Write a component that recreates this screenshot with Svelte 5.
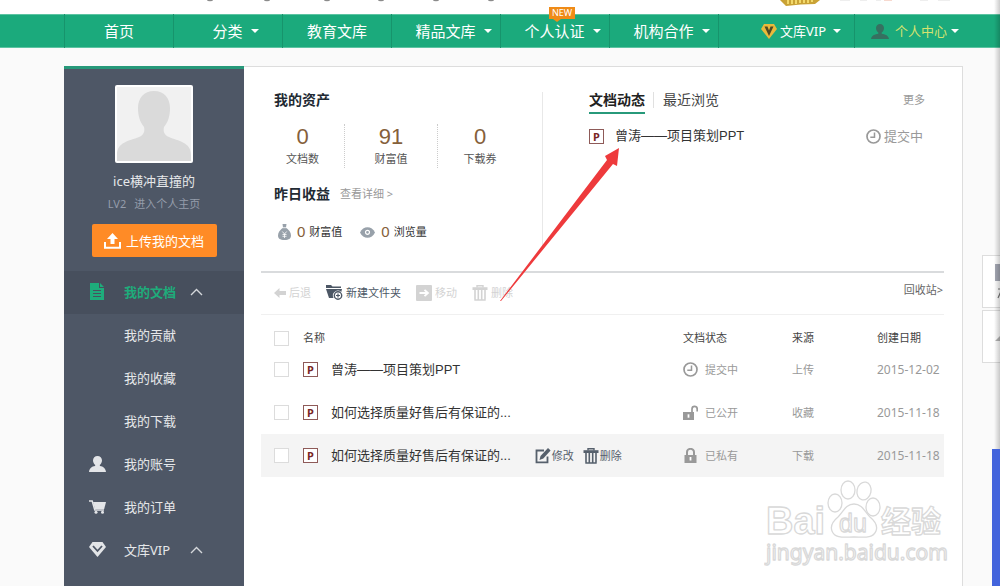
<script>
  const navItems = [
    { id: 'home', label: '首页' },
    { id: 'category', label: '分类', caret: true },
    { id: 'edu', label: '教育文库' },
    { id: 'featured', label: '精品文库', caret: true },
    { id: 'verify', label: '个人认证', caret: true, badge: 'NEW' },
    { id: 'partner', label: '机构合作', caret: true },
  ];

  const menu = [
    { id: 'docs', label: '我的文档', icon: 'doc', active: true, open: true },
    { id: 'contrib', label: '我的贡献' },
    { id: 'favs', label: '我的收藏' },
    { id: 'downloads', label: '我的下载' },
    { id: 'account', label: '我的账号', icon: 'user' },
    { id: 'orders', label: '我的订单', icon: 'cart' },
    { id: 'vip', label: '文库VIP', icon: 'vip', open: true },
  ];

  const stats = [
    { value: 0, label: '文档数' },
    { value: 91, label: '财富值' },
    { value: 0, label: '下载券' },
  ];

  let rows = $state([
    { title: '曾涛——项目策划PPT', icon: 'clock', status: '提交中', source: '上传', date: '2015-12-02', checked: false },
    { title: '如何选择质量好售后有保证的...', icon: 'unlock', status: '已公开', source: '收藏', date: '2015-11-18', checked: false },
    { title: '如何选择质量好售后有保证的...', icon: 'lock', status: '已私有', source: '下载', date: '2015-11-18', checked: false, current: true },
  ]);

  let allChecked = $derived(rows.every((r) => r.checked));

  function toggleAll(e) {
    const on = e.currentTarget.checked;
    rows.forEach((r) => (r.checked = on));
  }
</script>

{#snippet icon(name)}
  {#if name === 'doc'}
    <svg width="14" height="17" viewBox="0 0 14 17" aria-hidden="true">
      <path d="M0 0h9v5h5v12H0z M10 0l4 4h-4z" fill="#1eac7b" />
      <path d="M3 7.5h8M3 10.5h8M3 13.5h8" stroke="#48515f" stroke-width="1" />
    </svg>
  {:else if name === 'user'}
    <svg width="17" height="16" viewBox="0 0 17 16" aria-hidden="true">
      <path d="M8.500 0C5.900 0 4 2 4 4.600 4 6.400 5 8.200 6.300 9L6 10C3 10.500 0.500 12 0 16h17c-.5-4-3-5.500-6-6l-.3-1C12 8.200 13 6.400 13 4.600 13 2 11.100 0 8.500 0z" fill="currentColor" />
    </svg>
  {:else if name === 'cart'}
    <svg width="17" height="14" viewBox="0 0 17 14" aria-hidden="true">
      <path d="M0 1h3.200l2.600 9H15" fill="none" stroke="currentColor" stroke-width="1.500" />
      <path d="M4 2h13l-1.800 7H6z" fill="currentColor" />
      <circle cx="7" cy="12.300" r="1.500" fill="currentColor" />
      <circle cx="13.500" cy="12.300" r="1.500" fill="currentColor" />
    </svg>
  {:else if name === 'vip'}
    <svg width="17" height="15" viewBox="0 0 17 15" aria-hidden="true">
      <path d="M3.500 0h10L17 5 8.500 15 0 5z" fill="currentColor" />
      <path d="M4 4l4.500 5L13 4" fill="none" stroke="#4e5766" stroke-width="1.800" />
    </svg>
  {:else if name === 'clock'}
    <svg width="15" height="15" viewBox="0 0 15 15" aria-hidden="true">
      <circle cx="7.500" cy="7.500" r="6.500" fill="none" stroke="currentColor" stroke-width="1.700" />
      <path d="M8.500 3.500v4.700H4.300" fill="none" stroke="currentColor" stroke-width="1.500" />
    </svg>
  {:else if name === 'unlock'}
    <svg width="15" height="15" viewBox="0 0 15 15" aria-hidden="true">
      <path d="M9 7V4a2.600 2.600 0 0 1 5.200 0v2.500" fill="none" stroke="currentColor" stroke-width="1.700" />
      <path d="M0 7h11v8H0z" fill="currentColor" />
      <path d="M5.500 9.300v3.400" stroke="#fff" stroke-width="1.800" />
    </svg>
  {:else if name === 'lock'}
    <svg width="15" height="15" viewBox="0 0 15 15" aria-hidden="true">
      <path d="M4 8V4a3.500 3.200 0 0 1 7 0v4" fill="none" stroke="currentColor" stroke-width="2" />
      <path d="M1.500 7h12v8h-12z" fill="currentColor" />
      <path d="M7.500 9v3.500" stroke="#fff" stroke-width="1.800" />
    </svg>
  {:else if name === 'trash'}
    <svg width="16" height="16" viewBox="0 0 16 16" aria-hidden="true">
      <path d="M5 2.500V.8h6v1.700" fill="none" stroke="currentColor" stroke-width="1.400" />
      <path d="M.5 2.200h15V5H.5z" fill="currentColor" />
      <path d="M3 5v9.500M6.300 5v9.500M9.700 5v9.500M13 5v9.500M2.300 15h11.400" stroke="currentColor" stroke-width="1.600" />
    </svg>
  {:else if name === 'edit'}
    <svg width="16" height="16" viewBox="0 0 16 16" aria-hidden="true">
      <path d="M9 2.500H1.500v11.800h11V8.500" fill="none" stroke="currentColor" stroke-width="1.800" />
      <path d="M13 0l2.600 2.400-7.300 8-3.800 1.700 1-4z" fill="currentColor" />
    </svg>
  {/if}
{/snippet}

<div class="page">
  <header>
    <div class="top-strip">
      <svg class="strip-art" width="800" height="6" viewBox="0 0 800 6" aria-hidden="true">
        <g fill="#8b8b8b">
          <ellipse cx="10" cy="0" rx="3" ry="1.200" />
          <ellipse cx="67" cy="0" rx="3" ry="1.200" />
          <ellipse cx="127" cy="0" rx="3" ry="1.200" />
          <ellipse cx="181" cy="0" rx="3" ry="1.200" />
          <ellipse cx="236" cy="0" rx="3" ry="1.200" />
          <ellipse cx="291" cy="0" rx="3" ry="1.200" />
        </g>
        <path d="M580 0h40l-5 4q-14 0-29 2z" fill="#c9a235" />
        <path d="M588 0v4M592 0v4M596 0v4M600 0v3M604 0v3M608 0v3M612 0v2" stroke="#f2d96b" stroke-width="2" />
        <path d="M640 0h10M660 0h7M676 0h5M720 0h8M738 0h12" stroke="#ddd" stroke-width="1" />
        <path d="M684 0h8" stroke="#f0b3a0" stroke-width="1" />
      </svg>
    </div>
    <nav class="nav">
      {#each navItems as item}
        <a class="nav-item" href="#{item.id}">
          {item.label}
          {#if item.caret}<i class="caret"></i>{/if}
          {#if item.badge}<span class="badge">{item.badge}</span>{/if}
        </a>
      {/each}
      <a class="nav-item vip" href="#vip">
        <svg width="16" height="15" viewBox="0 0 16 15" aria-hidden="true">
          <path d="M3 0h10l3 5-8 10L0 5z" fill="#e9b93b" />
          <path d="M3.500 2.500h3L8 6.500l1.500-4h3L8 12z" fill="#4d4a25" />
        </svg>
        <span>文库VIP</span>
        <i class="caret"></i>
      </a>
      <a class="nav-item me" href="#me">
        <svg width="18" height="15" viewBox="0 0 18 15" aria-hidden="true">
          <path d="M9 0C6.600 0 5 1.800 5 4s1 3.700 2.300 4.500v1.300C4 10.500 1 11 0 15h18c-1-4-4-4.500-7.300-5.200V8.500C12 7.700 13 6.200 13 4s-1.600-4-4-4z" fill="#367060" />
        </svg>
        <span>个人中心</span>
        <i class="caret"></i>
      </a>
    </nav>
  </header>

  <div class="body">
    <aside class="sidebar">
      <svg class="avatar" width="78" height="78" viewBox="0 0 78 78" role="img" aria-label="头像">
        <rect width="78" height="78" rx="2" fill="#fff" />
        <rect x="2" y="2" width="74" height="74" fill="#f1f1f1" />
        <path d="M39 6C29 6 23 13 23 23c0 8 2 14 6 19 1 4 0 8-5 10C14 56 2 57 2 70v6h74v-6C76 57 63 56 54 52c-5-2-6-6-5-10 4-5 6-11 6-19C55 13 49 6 39 6z" fill="#dadada" />
      </svg>
      <div class="name">ice横冲直撞的</div>
      <div class="level"><span>LV2</span><a href="#profile">进入个人主页</a></div>
      <button class="upload">
        <svg width="17" height="16" viewBox="0 0 17 16" aria-hidden="true">
          <path d="M8.500 0L14 6h-3.500v5h-4V6H3z" fill="#fff" />
          <path d="M1 9v5.700h15V9" fill="none" stroke="#fff" stroke-width="2" />
        </svg>
        上传我的文档
      </button>
      <ul class="menu">
        {#each menu as m}
          <li>
            <a href="#{m.id}" class:active={m.active}>
              <span class="menu-icon">{#if m.icon}{@render icon(m.icon)}{/if}</span>
              <span class="menu-label">{m.label}</span>
              {#if m.open}
                <svg class="chev" width="13" height="8" viewBox="0 0 13 8" aria-hidden="true">
                  <path d="M1 7l5.500-5.500L12 7" fill="none" stroke="#d5d8dc" stroke-width="1.400" />
                </svg>
              {/if}
            </a>
          </li>
        {/each}
      </ul>
    </aside>

    <main class="panel">
      <section class="overview">
        <div class="assets">
          <h2>我的资产</h2>
          <div class="stats">
            {#each stats as s}
              <div class="stat"><b>{s.value}</b><span>{s.label}</span></div>
            {/each}
          </div>
          <div class="income-hdr">
            <h2>昨日收益</h2>
            <a href="#income">查看详细 &gt;</a>
          </div>
          <div class="income">
            <svg width="13" height="16" viewBox="0 0 13 16" aria-hidden="true">
              <path d="M4.500 0h4l-.5 3.500C11 6 13 8.500 13 11.500 13 14.500 11 16 6.500 16S0 14.500 0 11.500C0 8.500 2 6 5 3.500z" fill="#98a1aa" />
              <path d="M4 3.700h5M4.300 7.500l2.200 2.500 2.200-2.500M6.500 10v4M4.500 10.500h4M4.500 12.300h4" fill="none" stroke="#fff" stroke-width=".8" />
            </svg>
            <b>0</b><span>财富值</span>
            <svg class="eye" width="15" height="11" viewBox="0 0 15 11" aria-hidden="true">
              <path d="M0 5.500C3-1.500 12-1.500 15 5.500 12 12.500 3 12.500 0 5.500z" fill="#98a1aa" />
              <circle cx="7.500" cy="5.300" r="2" fill="none" stroke="#fff" stroke-width="1.200" />
            </svg>
            <b>0</b><span>浏览量</span>
          </div>
        </div>

        <div class="feed">
          <div class="tabs">
            <button class="tab on">文档动态</button>
            <button class="tab">最近浏览</button>
            <a class="more" href="#more">更多</a>
          </div>
          <div class="feed-row">
            <span class="ppt">P</span>
            <a class="title" href="#doc">曾涛——项目策划PPT</a>
            <span class="feed-status">{@render icon('clock')}提交中</span>
          </div>
        </div>
      </section>

      <div class="toolbar">
        <button disabled>
          <svg width="12" height="10" viewBox="0 0 12 10" aria-hidden="true">
            <path d="M0 5l5.500-5v3H12v4H5.500v3z" fill="currentColor" />
          </svg>
          后退
        </button>
        <button>
          <svg width="17" height="15" viewBox="0 0 17 15" aria-hidden="true">
            <path d="M0 0h5l1.500 1.500H15V3H0zM0 4h16l-.7 3A5 5 0 0 0 7.500 13H3z" fill="currentColor" />
            <circle cx="12" cy="10.500" r="3.700" fill="none" stroke="currentColor" stroke-width="1.400" />
            <path d="M12 8.500v4M10 10.500h4" stroke="currentColor" stroke-width="1.200" />
          </svg>
          新建文件夹
        </button>
        <button disabled>
          <svg width="16" height="16" viewBox="0 0 16 16" aria-hidden="true">
            <rect width="16" height="16" rx="1" fill="currentColor" />
            <path d="M3.500 8H11M8.500 4.800L12 8l-3.500 3.200" fill="none" stroke="#fff" stroke-width="1.800" />
          </svg>
          移动
        </button>
        <button disabled>{@render icon('trash')}删除</button>
        <a class="recycle" href="#recycle">回收站&gt;</a>
      </div>

      <table>
        <thead>
          <tr>
            <th class="c-check"><input type="checkbox" aria-label="全选" checked={allChecked} onchange={toggleAll} /></th>
            <th class="c-name">名称</th>
            <th class="c-status">文档状态</th>
            <th class="c-source">来源</th>
            <th class="c-date">创建日期</th>
          </tr>
        </thead>
        <tbody>
          {#each rows as row}
            <tr class:current={row.current}>
              <td class="c-check"><input type="checkbox" aria-label={row.title} bind:checked={row.checked} /></td>
              <td>
                <div class="doc">
                  <span class="ppt">P</span>
                  <a class="title" href="#doc">{row.title}</a>
                  {#if row.current}
                    <div class="actions">
                      <button>{@render icon('edit')}修改</button>
                      <button>{@render icon('trash')}删除</button>
                    </div>
                  {/if}
                </div>
              </td>
              <td><div class="status">{@render icon(row.icon)}{row.status}</div></td>
              <td>{row.source}</td>
              <td class="date">{row.date}</td>
            </tr>
          {/each}
        </tbody>
      </table>
    </main>
  </div>

  <!-- pointer from the toolbar up to the newest document -->
  <svg class="arrow" width="120" height="154" viewBox="0 0 120 154" aria-hidden="true">
    <path d="M0 153L107 12 105 8 119 0 117 18 113 16 1 153z" fill="#ee3a3c" />
  </svg>

  <svg class="watermark" width="184" height="90" viewBox="0 0 184 90" aria-hidden="true">
    <g fill="#fff" stroke="#d9d9d9" stroke-width="1.300" stroke-linejoin="round">
      <text class="latin" x="2" y="56" font-size="38" font-weight="700">Bai</text>
      <text x="117" y="54" font-size="30" font-weight="700">经验</text>
      <ellipse cx="71" cy="25" rx="7" ry="9" />
      <ellipse cx="84" cy="12" rx="7" ry="9" />
      <ellipse cx="100" cy="13" rx="7" ry="9" transform="rotate(12 100 13)" />
      <ellipse cx="109" cy="29" rx="7" ry="9" />
      <path d="M90 26c-8 0-11 8-16 13-6 5-8 9-6 14 3 8 13 6 22 6s19 2 22-6c2-5 0-9-6-14-5-5-8-13-16-13z" />
      <text class="latin" x="75" y="54" font-size="25">du</text>
      <text x="2" y="82" font-size="21">jingyan.baidu.com</text>
    </g>
  </svg>

  <div class="dock">
    <button class="dock-btn" aria-label="二维码">
      <svg width="12" height="36" viewBox="0 0 12 36" aria-hidden="true">
        <path d="M0 0h12v17H0z" fill="#a5a8b4" />
        <path d="M3 25h9M7 25l-4 9M6 29h6" stroke="#777" stroke-width="1.200" fill="none" />
      </svg>
    </button>
    <button class="dock-btn" aria-label="返回顶部">
      <svg width="12" height="10" viewBox="0 0 12 10" aria-hidden="true">
        <path d="M0 9L9 0h3v6l-6 3z" fill="#b5b5b5" />
      </svg>
    </button>
  </div>
  <div class="edge"></div>
  <div class="edge-blue"></div>
</div>

<style>
  :global(body) { margin: 0; background: #fafafa; }
  .page { position: relative; min-height: 100vh; display: flex; flex-direction: column; overflow: hidden; font-family: "Noto Sans", "Noto Sans CJK SC", sans-serif; font-size: 13px; line-height: 20px; color: #333; }
  a { color: inherit; text-decoration: none; }
  button { display: flex; align-items: center; padding: 0; border: 0; background: none; font: inherit; color: inherit; cursor: pointer; }
  h2 { margin: 0; font-size: 14px; line-height: 16px; font-weight: 700; color: #222a33; }
  svg { flex: none; display: block; }

  .top-strip { height: 14px; background: #fff; }
  .strip-art { margin-left: 200px; }
  .nav { display: flex; height: 34px; padding-left: 64px; background: #1baa7c; box-shadow: inset 0 1px #5cc4a2, inset 0 -1px #5cc4a2; }
  .nav-item { position: relative; box-sizing: border-box; width: 109px; display: flex; align-items: center; justify-content: center; border-left: 1px solid #17946c; color: #fff; font-size: 15px; white-space: nowrap; }
  .caret { width: 0; height: 0; margin: 0 -15px 0 8px; border: 4px solid transparent; border-top-color: #fff; border-bottom: 0; }
  .vip, .me { font-size: 13px; justify-content: flex-start; }
  .vip { width: 136px; padding-left: 42px; gap: 3px; }
  .me { width: auto; flex: 1; padding-left: 16px; gap: 6px; }
  .me span { color: #d5e26f; }
  .vip .caret { margin: 0 0 0 4px; }
  .me .caret { margin: 0 0 0 -2px; }
  .badge { position: absolute; left: 48px; top: -7px; width: 26px; text-align: center; background: #ef8b17; font-size: 9px; line-height: 12px; }
  .badge::after { content: ''; position: absolute; left: 4px; top: 12px; border: 4px solid transparent; border-top: 3px solid #ef8b17; border-bottom: 0; }

  .body { flex: 1; display: flex; margin: 18px 37px 0 64px; }
  .sidebar { flex: none; box-sizing: border-box; width: 180px; padding-top: 16px; display: flex; flex-direction: column; align-items: center; background: #4e5766; border-top: 3px solid #27997a; color: #e6e8ea; }
  .name { margin-top: 8px; }
  .level { margin-top: 4px; display: flex; gap: 8px; font-size: 11px; line-height: 18px; color: #959dab; }
  .upload { margin: 11px 0 14px; height: 33px; width: 125px; justify-content: center; gap: 5px; border-radius: 2px; background: #ff8b26; color: #fff; }
  .menu { list-style: none; margin: 0; padding: 0; width: 100%; }
  .menu a { box-sizing: border-box; display: flex; align-items: center; height: 43px; padding-bottom: 2px; }
  .menu a.active { background: #474f5d; color: #1eac7b; font-weight: 700; }
  .menu-icon { width: 35px; padding-left: 25px; display: flex; align-items: center; color: #e3e5e8; }
  .active .menu-icon { width: 34px; padding-left: 26px; }
  .menu-label { min-width: 52px; }
  .chev { margin-left: 14px; }

  .panel { flex: 1; min-width: 0; padding: 0 18px 0 17px; background: #fff; border-top: 1px solid #ddd; border-right: 1px solid #ddd; }
  .overview { display: flex; padding: 25px 0 21px; }
  .assets { box-sizing: border-box; width: 282px; padding-bottom: 9px; border-right: 1px solid #e8e8e8; }
  .assets > h2, .income-hdr { margin-left: 13px; }
  .stats { display: flex; width: 261px; margin-top: 16px; }
  .stat { flex: 83; display: flex; flex-direction: column; align-items: center; }
  .stat + .stat { flex: 92; border-left: 1px dotted #ccc; }
  .stat + .stat + .stat { flex: 84; }
  .stat b { font: 22px/26px "Liberation Sans", sans-serif; color: #85603a; }
  .stat span { font-size: 11px; line-height: 18px; color: #555; }
  .income-hdr { display: flex; align-items: center; gap: 10px; margin-top: 18px; }
  .income-hdr a { font-size: 11px; line-height: 16px; color: #999; }
  .income { display: flex; align-items: center; margin: 21px 0 0 17px; font-size: 11px; line-height: 18px; }
  .income b { margin: 0 4px 0 6px; font: 15px/18px "Liberation Sans", sans-serif; color: #85603a; }
  .income .eye { margin-left: 18px; }

  .feed { flex: 1; padding: 0 19px 0 46px; }
  .tabs { display: flex; align-items: flex-start; }
  .tab { font-size: 14px; line-height: 16px; color: #444; }
  .tab.on { padding-bottom: 4px; border-bottom: 2px solid #27997a; font-weight: 700; color: #222; }
  .tab + .tab { margin-left: 8px; padding-left: 9px; border-left: 1px solid #e0e0e0; }
  .more { margin-left: auto; font-size: 11px; line-height: 16px; color: #999; }
  .feed-row { display: flex; align-items: center; gap: 11px; margin-top: 12px; padding-right: 2px; }
  .feed-status { margin-left: auto; display: flex; align-items: center; gap: 3px; color: #999; }
  .ppt { flex: none; box-sizing: border-box; width: 15px; height: 15px; border: 1px solid #8e5a58; background: #fff; text-align: center; font-size: 11px; line-height: 13px; font-weight: 700; color: #7a2524; }
  .title { font-family: "Liberation Sans", "Noto Sans CJK SC", sans-serif; }

  .toolbar { display: flex; align-items: center; gap: 15px; height: 39px; padding: 0 0 2px 13px; border-top: 2px solid #d9dbdd; border-bottom: 1px solid #f0f0f0; font-size: 11px; }
  .toolbar button { gap: 3px; color: #4c5765; white-space: nowrap; }
  .toolbar button:disabled { color: #d3d3d3; cursor: default; }
  .recycle { margin: 0 1px 6px auto; color: #666; }

  table { width: 100%; table-layout: fixed; border-collapse: collapse; margin-top: 11px; font-size: 11px; color: #999; }
  th { height: 20px; padding: 2px 0 0; font-weight: 400; text-align: left; color: #444; }
  td { height: 43px; padding: 0; }
  .c-check { width: 29px; padding-left: 13px; }
  .c-status { width: 109px; }
  .c-source { width: 85px; }
  .c-date { width: 67px; }
  .date { font-size: 12px; }
  input[type="checkbox"] { appearance: none; display: block; width: 15px; height: 15px; margin: 0; border: 1px solid #dcdcdc; background: #fff; }
  input[type="checkbox"]:checked { background: #1baa7c; }
  .current { background: #f4f4f4; }
  .doc { display: flex; align-items: center; font-size: 13px; color: #333; white-space: nowrap; }
  .doc a { margin-left: 13px; }
  .actions { display: flex; gap: 9px; margin-left: 24px; font-size: 11px; color: #56606c; }
  .actions button { gap: 1px; }
  .status { display: flex; align-items: center; gap: 7px; }

  .arrow { position: absolute; left: 500px; top: 148px; pointer-events: none; }
  .watermark { position: absolute; left: 764px; top: 478px; pointer-events: none; }
  .watermark text { font-family: "Noto Sans", "Noto Sans CJK SC", sans-serif; }
  .watermark .latin { font-family: "Liberation Sans", sans-serif; }
  .dock { position: absolute; right: 0; top: 255px; width: 18px; display: flex; flex-direction: column; gap: 2px; }
  .dock-btn { box-sizing: border-box; height: 53px; padding-left: 12px; border: 1px solid #ddd; border-right: 0; background: #fff; overflow: hidden; }
  .edge { position: absolute; right: 0; top: 0; bottom: 0; width: 6px; background: linear-gradient(to right, transparent, #0003); pointer-events: none; }
  .edge-blue { position: absolute; right: 0; top: 449px; bottom: 0; width: 8px; background: #4364dc; }
</style>
